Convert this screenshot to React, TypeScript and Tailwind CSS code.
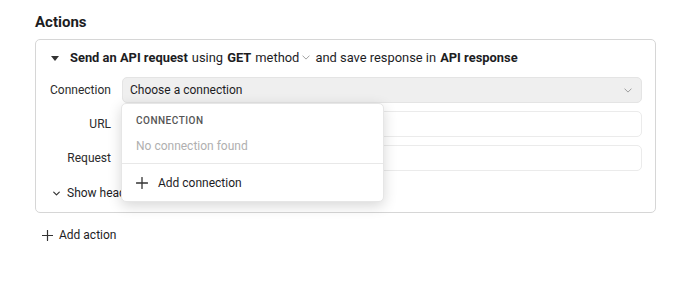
import React from "react";

const Chevron = ({ className = "", sw = 1 }: { className?: string; sw?: number }) => (
  <svg viewBox="0 0 10 6" className={className} fill="none" stroke="currentColor" strokeWidth={sw} strokeLinecap="round" strokeLinejoin="round">
    <path d="M1 1l4 4 4-4" />
  </svg>
);

const Plus = ({ className = "" }: { className?: string }) => (
  <svg viewBox="0 0 12 12" className={className} fill="none" stroke="currentColor" strokeWidth="1.3" strokeLinecap="round">
    <path d="M6 0.5v11M0.5 6h11" />
  </svg>
);

export default function App() {
  return (
    <div
      className="w-[690px] h-[284px] bg-white text-[#1d1d1f] overflow-hidden"
      style={{ fontFamily: "Roboto, 'Noto Sans', sans-serif" }}
    >
      <div className="pl-[35px] pt-[12px] w-[656px]">
        <h2 className="text-[15px] leading-[20px] font-bold">Actions</h2>
        <div className="mt-[7px] border border-[#d6d6d6] rounded-[5px] pl-[14px] pr-[13px] pt-[8px] pb-[9px] text-[12px]">
          <div className="flex items-center h-[20px] text-[12.9px]">
            <svg viewBox="0 0 8 5" className="w-[8px] h-[5px] text-[#333] ml-[1px]" fill="currentColor">
              <path d="M0 0h8L4 5z" />
            </svg>
            <div className="ml-[11px] flex items-center whitespace-nowrap">
              <span className="font-bold">Send an API request</span>
              <span className="ml-[4px]">using</span>
              <span className="ml-[4px] font-bold">GET</span>
              <span className="ml-[4px]">method</span>
              <Chevron className="ml-[3px] w-[8px] h-[5px] text-[#8a8a8a]" />
              <span className="ml-[5px]">and save response in</span>
              <span className="ml-[4px] font-bold">API response</span>
            </div>
          </div>

          <div className="mt-[9px] flex flex-col gap-[8px]">
            <div className="flex items-center">
              <div className="w-[61px] text-[#2b2b2b]">Connection</div>
              <div className="relative ml-[11px] flex-1">
                <div className="h-[26px] rounded-[5px] bg-[#efefef] border border-[#e4e4e4] flex items-center justify-between pl-[7px] pr-[9px]">
                  <span>Choose a connection</span>
                  <Chevron className="w-[8px] h-[5px] text-[#888]" />
                </div>
                <div className="absolute left-[-1px] top-[26px] w-[263px] z-10 bg-white rounded-[5px] border border-[#e6e6e6] shadow-[0_4px_14px_rgba(0,0,0,0.16)]">
                  <div className="px-[14px] pt-[11px] pb-[10px]">
                    <div className="text-[10px] leading-[12px] font-medium tracking-[0.05em] text-[#555]">CONNECTION</div>
                    <div className="mt-[12px] leading-[14px] text-[#b0b0b0]">No connection found</div>
                  </div>
                  <div className="border-t border-[#e8e8e8]" />
                  <div className="flex items-center px-[14px] h-[37px]">
                    <Plus className="w-[12px] h-[12px] text-[#333]" />
                    <span className="ml-[10px]">Add connection</span>
                  </div>
                </div>
              </div>
            </div>
            <div className="flex items-center">
              <div className="w-[61px] text-right text-[#2b2b2b]">URL</div>
              <div className="ml-[11px] flex-1 h-[26px] rounded-[5px] border border-[#ebebeb] bg-white" />
            </div>
            <div className="flex items-center">
              <div className="w-[61px] text-right text-[#2b2b2b]">Request</div>
              <div className="ml-[11px] flex-1 h-[26px] rounded-[5px] border border-[#ebebeb] bg-white" />
            </div>
          </div>

          <div className="mt-[12px] flex items-center h-[20px]">
            <Chevron sw={1.7} className="ml-[3px] w-[7px] h-[5px] text-[#333]" />
            <span className="ml-[7px]">Show headers</span>
          </div>
        </div>

        <div className="mt-[12px] ml-[7px] flex items-center h-[20px] text-[12px]">
          <Plus className="w-[11px] h-[11px] text-[#333]" />
          <span className="ml-[6px]">Add action</span>
        </div>
      </div>
    </div>
  );
}
